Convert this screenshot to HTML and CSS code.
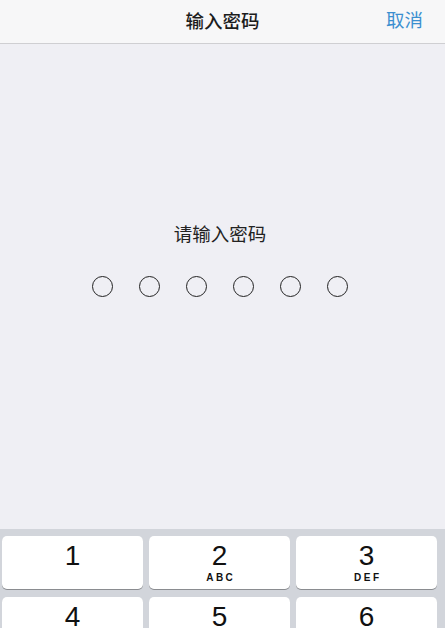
FILE: index.html
```html
<!DOCTYPE html>
<html lang="zh-CN">
<head>
<meta charset="UTF-8">
<title>输入密码</title>
<link rel="stylesheet" href="styles.css">
</head>
<body>
    <div class="header">
        <span class="title">输入密码</span>
        <a class="cancel" href="#">取消</a>
    </div>
    <div class="main">
        <p class="tip">请输入密码</p>
        <ul class="dots">
            <li></li><li></li><li></li><li></li><li></li><li></li>
        </ul>
    </div>
    <div class="keyboard">
        <div class="key"><b>1</b></div>
        <div class="key"><b>2</b><i>ABC</i></div>
        <div class="key"><b>3</b><i>DEF</i></div>
        <div class="key"><b>4</b><i>GHI</i></div>
        <div class="key"><b>5</b><i>JKL</i></div>
        <div class="key"><b>6</b><i>MNO</i></div>
        <div class="key"><b>7</b><i>PQRS</i></div>
        <div class="key"><b>8</b><i>TUV</i></div>
        <div class="key"><b>9</b><i>WXYZ</i></div>
    </div>
</body>
</html>
```
FILE: styles.css
```css
html,body{ margin:0; padding:0; height:100%; overflow:hidden;}
body{ background:#efeff4; font-family:"Noto Sans CJK SC", sans-serif; color:#1c1c1c;}
.header{ height:43px; background:#f7f7f8; border-bottom:1px solid #cfcfd2; display:flex; align-items:center; justify-content:center; position:relative;}
.header .title{ font-size:18.5px; font-weight:500; line-height:24px; margin-top:-3px;}
.header .cancel{ position:absolute; right:22px; top:7px; font-size:18.5px; line-height:24px; color:#3b8fd0; text-decoration:none;}
.main{ height:485px; display:flex; flex-direction:column; align-items:center;}
.tip{ margin:177px 0 0 -5px; font-size:18.5px; line-height:24px; color:#222;}
.dots{ list-style:none; margin:31px 0 0 -5px; padding:0; display:flex; gap:26px;}
.dots li{ width:21px; height:21px; box-sizing:border-box; border:1.5px solid #222; border-radius:50%;}
.keyboard{ background:#d2d5db; padding:7px 8px 0 2px; display:grid; grid-template-columns:repeat(3,1fr); column-gap:6px; row-gap:8px;}
.key{ height:53px; background:#fff; border-radius:5px; box-shadow:0 1px 0 #8a8c90; display:flex; flex-direction:column; align-items:center; font-family:"Liberation Sans", Arial, sans-serif;}
.key b{ font-weight:normal; font-size:28px; line-height:32px; margin-top:4px; color:#111;}
.key i{ font-style:normal; font-weight:bold; font-size:10px; letter-spacing:2.5px; margin-right:-2.5px; line-height:12px; color:#111;}
```
